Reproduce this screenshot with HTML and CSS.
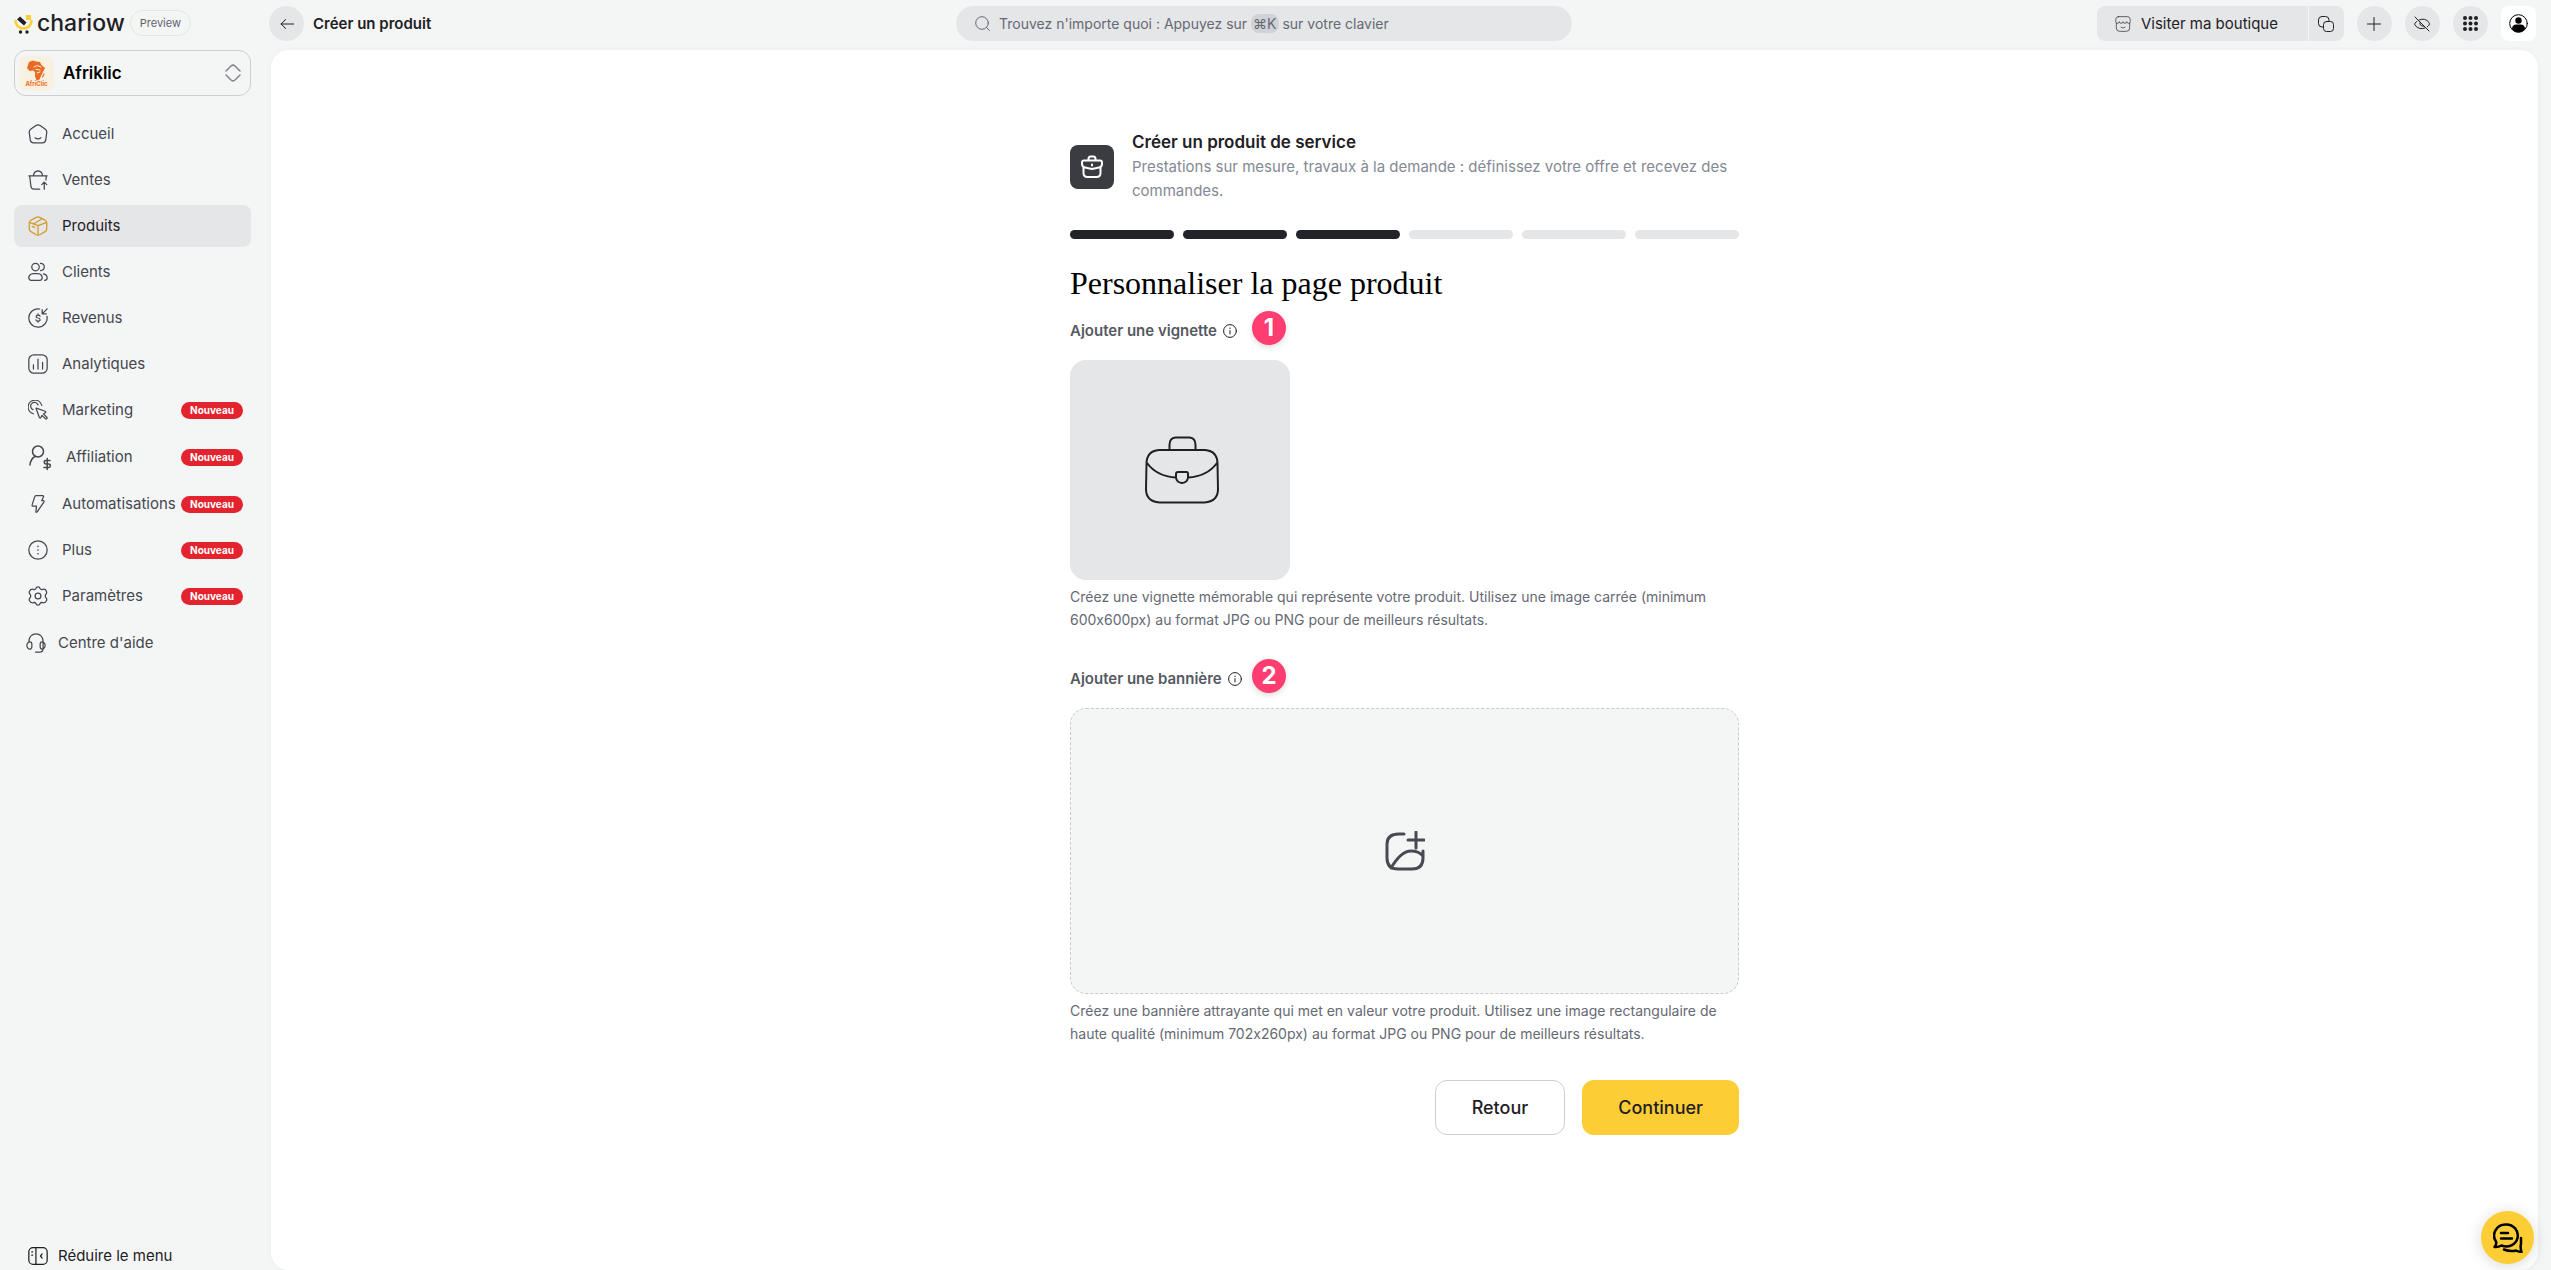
FILE: index.html
```html
<!DOCTYPE html>
<html lang="fr">
<head>
  <meta charset="UTF-8" />
  <meta name="viewport" content="width=device-width, initial-scale=1" />
  <title>Créer un produit - Chariow</title>
  <link rel="stylesheet" href="styles.css">
</head>
<body>
  <aside class="sidebar">
    <div class="brand">
      <a class="logo" href="#">
        <svg width="19" height="21" viewBox="0 0 19 21" aria-hidden="true">
          <path d="M1.500 8a8 7.500 0 0 0 16 0" fill="none" stroke="#fdcd35" stroke-width="2.600"/>
          <rect x="12" y="2" width="5" height="5" fill="#fdcd35"/>
          <path d="M3 6.500 6 3.500 12.500 9.500 10 12.500z" fill="#1f2024"/>
          <circle cx="6.500" cy="19" r="1.700" fill="#1f2024"/>
          <circle cx="13" cy="19" r="1.700" fill="#1f2024"/>
        </svg>
        <span>chariow</span>
      </a>
      <span class="preview">Preview</span>
    </div>

    <button class="store" type="button">
      <svg class="store-logo" width="35" height="35" viewBox="0 0 35 35" aria-hidden="true">
        <rect width="35" height="35" rx="8" fill="#f8f0e0"/>
        <path d="M10 6l4-1.500 3 1 4 .5 1.500 3 3.500 3-2 4-1.500 3-2 4.500-3 1-1.500-4v-4l-1.500-2-4 .5-2.500-3z" fill="#ea6b24"/>
        <path d="M15 11l3-1.500 4 1.500M17 13.500l4 .5M18 17l3-1" stroke="#f8f0e0" stroke-width="1" fill="none"/>
        <path d="M25 18l-1.500 3" stroke="#ea6b24" stroke-width="1.200"/>
        <text x="17.500" y="30" text-anchor="middle">AfriClic</text>
      </svg>
      <span class="store-name">Afriklic</span>
      <svg width="16" height="18" viewBox="0 0 16 18" class="chevrons"><path d="M1 7l5-5q2-1.700 4 0l5 5M1 11l5 5q2 1.700 4 0l5-5"/></svg>
    </button>

    <nav class="menu">
      <a href="#"><svg class="icon" viewBox="0 0 24 24"><path d="M9.500 1.800Q12 .200 14.500 1.800l6.300 4.500q2 1.500 1.700 4l-1.200 8.700q-.6 3.500-3.800 3.500h-11q-3.200 0-3.800-3.500L1.500 10.300q-.3-2.500 1.700-4zM8.500 16.500q3.500 2.500 7 0"/></svg><span>Accueil</span></a>
      <a href="#"><svg class="icon" viewBox="0 0 24 24"><path d="M1 7h22M6.500 7q.5-5.500 5.500-6 5 .5 5.500 6M2 7l1.500 12.500q.4 3.500 3.500 3.500h7M22 7l-.5 5M19.500 23v-8.500M16.500 17.500l3-3 3 3"/></svg><span>Ventes</span></a>
      <a href="#" class="active"><svg class="icon" viewBox="0 0 24 24"><path d="M12 23q-1 0-2-.5l-6.500-3.700Q1.500 17.700 1.500 15.500V7.700L12 11.500l10.500-3.800v7.800q0 2.200-2 3.300L14 22.500q-1 .5-2 .5zV11.500M1.500 7.700Q1.800 6 3.500 5L10 1.600q2-1 4 0L20.500 5q1.700 1 2 2.700M6.500 9.500l10-6M5 12.500l3 1.200"/></svg><span>Produits</span></a>
      <a href="#"><svg class="icon" viewBox="0 0 24 24"><circle cx="9" cy="6" r="4.500"/><path d="M15 1.700q4.500.3 4.500 4.300t-4.500 4.300M6.500 14h5q5.500.5 5.500 5 0 3-3 3H4q-3 0-3-3 0-4.500 5.500-5zM18.500 14.200q4.500.8 4.500 5 0 2.500-3 2.800"/></svg><span>Clients</span></a>
      <a href="#"><svg class="icon" viewBox="0 0 24 24"><path d="M14 1.200A11 11 0 1 0 22.800 10M23 1l-6 6M17 2v5h5M14.500 9.800q-.5-1.300-2.500-1.300-2.200 0-2.200 1.700T12 12q2.500.2 2.500 2T12 15.600q-2.200 0-2.500-1.400M12 7v1.500M12 15.600V17"/></svg><span>Revenus</span></a>
      <a href="#"><svg class="icon" viewBox="0 0 24 24"><rect x="1" y="1" width="22" height="22" rx="6"/><path d="M6.500 13v5M12 6v12M17.500 10v8"/></svg><span>Analytiques</span></a>
      <a href="#"><svg class="icon" viewBox="0 0 24 24"><path d="M6.500 16.500A8.300 8.300 0 1 1 16.500 6.500M6 11.500A4.500 4.500 0 1 1 12 6M10 11q-.8-1.800 1-1l9.500 3.500q2 1 0 2l-2 1.200 4 4q.8 1 0 1.700t-1.700 0l-4-4-1.300 2.500q-1 1.700-1.800 0z"/></svg><span>Marketing</span><b class="tag">Nouveau</b></a>
      <a href="#" class="tall"><svg class="icon wide" viewBox="0 0 24 24"><circle cx="10" cy="6.500" r="5.500"/><path d="M2 20q.5-6 5-8.500M22 15.500h-4q-1.800 0-1.800 1.700t1.800 1.800h2.500q1.800 0 1.800 1.700T20.500 22.500H16M19.200 13.500v11"/></svg><span>Affiliation</span><b class="tag">Nouveau</b></a>
      <a href="#"><svg class="icon" viewBox="0 0 24 24"><path d="M9.500 2h8q1.800 0 1 1.500L16.500 8h1.700q1.700.2.800 1.700L11 21.500q-1.500 1.500-1.500-.5l.7-6.500H6q-1.600-.2-1-1.700L8 3.500Q8.500 2 9.500 2z"/></svg><span>Automatisations</span><b class="tag">Nouveau</b></a>
      <a href="#"><svg class="icon" viewBox="0 0 24 24"><circle cx="12" cy="12" r="11"/><path d="M12 7.500v.1M12 12v.1M12 16.500v.1" stroke-width="2"/></svg><span>Plus</span><b class="tag">Nouveau</b></a>
      <a href="#"><svg class="icon" viewBox="0 0 24 24"><circle cx="12" cy="12" r="3.500"/><path d="M9.500 3Q10 1 12 1t2.500 2q1 2 3.200 1 2-.8 3.200.5t1.500 3Q22.500 9 21.500 9.800q-1.500 2.200 0 4.400 1.700 1.500.7 3.500-1.500 3-4.500 2.300-2.200-.7-3.200 1Q14 23 12 23t-2.500-2q-1-1.700-3.200-1-3 .7-4.500-2.300-1-2 .7-3.500 1.500-2.200 0-4.400-1.700-1.500-.7-3.500Q3.300 3.300 6.300 4q2.200 1 3.200-1z"/></svg><span>Paramètres</span><b class="tag">Nouveau</b></a>
      <a href="#" class="help"><svg class="icon" viewBox="0 0 24 24"><path d="M3.500 11V9.500a8.500 8.500 0 0 1 17 0V19q0 4-4 4h-5M3.500 11q3-1 3.500 2v4q-.5 3-3.500 2-2.500-1-2.500-4t2.500-4zM20.500 11q-3-1-3.500 2v4q.5 3 3.500 2 2.500-1 2.500-4t-2.500-4z"/></svg><span>Centre d'aide</span></a>
    </nav>

    <button class="collapse" type="button">
      <svg class="icon" viewBox="0 0 24 24"><rect x="1" y="2" width="22" height="20" rx="5"/><path d="M9.500 2v20M4.500 7h1M4.500 11h1M17 9.500l-2 2.500 2 2.500"/></svg>
      Réduire le menu
    </button>
  </aside>

  <div class="page">
    <header class="topbar">
      <div class="crumb">
        <button class="round" type="button" aria-label="Revenir"><svg width="14" height="12" viewBox="0 0 14 12"><path d="M14 6H1M5.500 1.500Q3 4.500 1 6q2 1.500 4.500 4.500"/></svg></button>
        <h1>Créer un produit</h1>
      </div>

      <button class="search" type="button">
        <svg width="15" height="15" viewBox="0 0 15 15"><circle cx="7" cy="7" r="6.300"/><path d="M11.500 11.500l3 3"/></svg>
        <span>Trouvez n'importe quoi : Appuyez sur <kbd>⌘K</kbd> sur votre clavier</span>
      </button>

      <div class="tools">
        <div class="shop">
          <a href="#" class="visit"><svg width="16" height="16" viewBox="0 0 24 24"><path d="M2 11v7q0 5 5 5h10q5 0 5-5v-7M5 1h14q3 0 3.500 3l.5 4q0 3-2.700 3-2.300 0-2.800-2.500Q17 11 14.800 11T12 8.500Q11.500 11 9.200 11T6.500 8.500Q6 11 3.700 11 1 11 1 8l.5-4Q2 1 5 1zM9 17q3 2.500 6 0"/></svg>Visiter ma boutique</a>
          <button class="copy" type="button" aria-label="Copier le lien"><svg width="16" height="16" viewBox="0 0 16 16"><path d="M5.500 11H4Q.5 11 .5 7.500V4Q.5.500 4 .5h3.500Q11 .5 11 4v1.500"/><rect x="5.500" y="5.500" width="10" height="10" rx="3"/></svg></button>
        </div>
        <button class="round" type="button" aria-label="Ajouter"><svg width="14" height="14" viewBox="0 0 14 14"><path d="M7 .500v13M.5 7h13"/></svg></button>
        <button class="round" type="button" aria-label="Masquer"><svg width="16" height="16" viewBox="0 0 16 16"><path d="M1 1l14 14M5 4Q11 1.300 15 6.500q1 1.300 0 2.700-.8 1-1.700 1.700M3 5.200Q2 6 1 7.200q-.7 1 0 2Q5 14.300 11 12M6 6.500q-1 3.500 3.500 3.700"/></svg></button>
        <button class="round" type="button" aria-label="Applications"><svg class="dots" width="15" height="15" viewBox="0 0 15 15"><circle cx="2" cy="2" r="2"/><circle cx="7.500" cy="2" r="2"/><circle cx="13" cy="2" r="2"/><circle cx="2" cy="7.500" r="2"/><circle cx="7.500" cy="7.500" r="2"/><circle cx="13" cy="7.500" r="2"/><circle cx="2" cy="13" r="2"/><circle cx="7.500" cy="13" r="2"/><circle cx="13" cy="13" r="2"/></svg></button>
        <button class="avatar" type="button" aria-label="Mon compte"><svg width="19" height="19" viewBox="0 0 19 19"><circle cx="9.500" cy="9.500" r="8.800" fill="none" stroke="#000"/><circle cx="9.500" cy="6.500" r="3.200"/><path d="M3 15q0-4.500 4.500-4.500h4q4.500 0 4.500 4.500-2.500 3.300-6.500 3.300T3 15z"/></svg></button>
      </div>
    </header>

    <main class="panel">
      <form class="product">
        <div class="intro">
          <span class="intro-icon"><svg width="24" height="24" viewBox="0 0 24 24"><path d="M8.500 5V4q0-2.500 2-2.500h3q2 0 2 2.500v1M4 5.500h16q2 0 2 2v1.500q0 3-3 3.500l-7 1.500-7-1.500Q2 12 2 9V7.500q0-2 2-2zM3.500 12.500V18q0 4 4 4h9q4 0 4-4v-5.500M12 9.500v1"/></svg></span>
          <div>
            <h2>Créer un produit de service</h2>
            <p>Prestations sur mesure, travaux à la demande : définissez votre offre et recevez des commandes.</p>
          </div>
        </div>

        <div class="steps">
          <i class="done"></i><i class="done"></i><i class="done"></i><i></i><i></i><i></i>
        </div>

        <h3>Personnaliser la page produit</h3>

        <div class="field">
          <div class="field-head">
            <label for="vignette">Ajouter une vignette</label>
            <svg class="info" width="14" height="14" viewBox="0 0 14 14"><circle cx="7" cy="7" r="6.400"/><path d="M7 6.500v3.500M7 4v.6"/></svg>
            <span class="marker">1</span>
          </div>
          <button class="vignette" id="vignette" type="button">
            <svg width="74" height="68" viewBox="0 0 74 68"><path d="M24.500 14V9q0-7 6-7.500h14q6 .5 6 7.500v5M1.500 28q0-13 12.500-14h46q12.500 1 12.500 14l.5 25q0 12.500-13.500 13.500h-45Q1 65.500 1 53zM2 27q10 13.500 29 14.500M72 27q-10 13.500-29 14.500M33 36h8.500q1.500 0 1.500 2v3.500q-.5 5-6 5.500-5.500-.5-6-5.500V38q0-2 2-2z"/></svg>
          </button>
          <p class="hint">Créez une vignette mémorable qui représente votre produit. Utilisez une image carrée (minimum 600x600px) au format JPG ou PNG pour de meilleurs résultats.</p>
        </div>

        <div class="field">
          <div class="field-head">
            <label for="banner">Ajouter une bannière</label>
            <svg class="info" width="14" height="14" viewBox="0 0 14 14"><circle cx="7" cy="7" r="6.400"/><path d="M7 6.500v3.500M7 4v.6"/></svg>
            <span class="marker">2</span>
          </div>
          <button class="banner" id="banner" type="button">
            <svg width="40" height="40" viewBox="0 0 40 40"><path d="M19 3h-5Q2 3 2 13v14q0 11 11 11h14q11 0 11-11v-7M6 37Q16 20 26 20q8 0 12 5M31 1v16M23 9h16"/></svg>
          </button>
          <p class="hint">Créez une bannière attrayante qui met en valeur votre produit. Utilisez une image rectangulaire de haute qualité (minimum 702x260px) au format JPG ou PNG pour de meilleurs résultats.</p>
        </div>

        <div class="actions">
          <button class="back" type="button">Retour</button>
          <button class="next" type="submit">Continuer</button>
        </div>
      </form>
    </main>
  </div>

  <button class="chat" type="button" aria-label="Discussion">
    <svg width="30" height="30" viewBox="0 0 30 30"><path d="M13 1.500a11.500 11 0 1 1-4.500 21Q5 24.500 1.500 24 4 21 3 18.500A11.500 11 0 0 1 13 1.500zM8 10h7M8 15.500h11M28 15v6q-1 3 .5 8-4-.5-5.500-1.500-6 1.500-12-1"/></svg>
  </button>
</body>
</html>
```

FILE: styles.css
```css
* { box-sizing: border-box; }
body {
  margin: 0;
  min-height: 100vh;
  display: flex;
  background: #f4f6f5;
  color: #1f2024;
  font-family: Inter, sans-serif;
  font-size: 15px;
  line-height: 24px;
  font-variant-ligatures: no-contextual;
}
button { font: inherit; font-variant-ligatures: inherit; color: inherit; border: none; padding: 0; cursor: pointer; }
a { color: inherit; text-decoration: none; }
h1, h2, h3, p { margin: 0; }
svg { fill: none; stroke: currentColor; stroke-linecap: round; stroke-linejoin: round; flex: none; }

/* sidebar */
.sidebar {
  width: 269px;
  flex: none;
  padding: 10px 18px 0 14px;
  display: flex;
  flex-direction: column;
  min-height: 100vh;
}
.brand { display: flex; align-items: center; gap: 5px; height: 26px; }
.logo { display: flex; align-items: center; gap: 4px; font-size: 23px; font-weight: 500; }
.logo svg { stroke: none; }
.preview {
  border: 1px solid #e4e5e7;
  border-radius: 13px;
  padding: 0 9px;
  font-size: 11px;
  color: #5f626c;
}
.store {
  margin-top: 14px;
  height: 46px;
  padding: 0 9px 0 4px;
  border: 1px solid #cdced3;
  border-radius: 12px;
  background: none;
  display: flex;
  align-items: center;
  gap: 9px;
  text-align: left;
}
.store-logo { stroke: none; }
.store-logo text { font-size: 6px; font-weight: 700; fill: #ea6b24; }
.store-name { flex: 1; font-size: 17px; font-weight: 600; color: #000; }
.chevrons { color: #82858f; stroke-width: 1.5; }

.menu { margin-top: 17px; display: flex; flex-direction: column; gap: 4px; }
.menu a {
  height: 42px;
  padding: 0 8px 0 14px;
  border-radius: 8px;
  display: flex;
  align-items: center;
  gap: 14px;
  color: #45474f;
}
.menu a.active { background: #e5e6e8; color: #1f2024; }
.menu a.active .icon { color: #d49a2b; }
.menu a.tall { height: 44px; }
.menu a.help { padding-left: 12px; gap: 12px; height: 44px; }
.menu span { flex: 1; min-width: 0; white-space: nowrap; }
.icon { width: 20px; height: 20px; stroke-width: 1.5; }
.icon.wide { width: 24px; height: 24px; overflow: visible; }
.tag {
  flex: none;
  width: 62px;
  background: #e3242f;
  color: #fff;
  border-radius: 9px;
  font-size: 10px;
  line-height: 17px;
  text-align: center;
}
.collapse {
  margin-top: auto;
  height: 28px;
  padding-left: 14px;
  background: none;
  display: flex;
  align-items: center;
  gap: 10px;
}

/* top bar */
.page { flex: 1; min-width: 0; display: flex; flex-direction: column; padding-right: 13px; }
.topbar {
  height: 50px;
  padding: 6px 2px 9px 0;
  display: flex;
  align-items: center;
  justify-content: space-between;
  gap: 16px;
}
.crumb { display: flex; align-items: center; gap: 9px; }
.crumb h1 { font-size: 15px; font-weight: 600; }
.round {
  width: 35px;
  height: 35px;
  border-radius: 50%;
  background: #e5e6e8;
  display: flex;
  align-items: center;
  justify-content: center;
}
.dots circle { fill: #1f2024; stroke: none; }
.search {
  width: 616px;
  height: 35px;
  padding: 0 19px;
  border-radius: 18px;
  background: #e5e6e8;
  color: #656973;
  font-size: 14px;
  display: flex;
  align-items: center;
  gap: 9px;
}
.search kbd { font: inherit; background: #d0d2d7; border-radius: 8px; padding: 1px 2px; }
.tools { display: flex; justify-content: flex-end; gap: 13px; }
.shop { display: flex; gap: 1px; border-radius: 8px; overflow: hidden; }
.visit, .copy { background: #e5e6e8; height: 35px; display: flex; align-items: center; }
.visit { padding: 0 30px 0 18px; gap: 10px; }
.copy { width: 35px; justify-content: center; }
.avatar {
  width: 35px;
  height: 35px;
  border-radius: 8px;
  background: #fff;
  display: flex;
  align-items: center;
  justify-content: center;
}
.avatar svg { stroke: none; fill: #000; }

/* form */
.panel {
  flex: 1;
  margin-left: 2px;
  background: #fff;
  border-radius: 18px;
  box-shadow: 0 0 6px rgba(0, 0, 0, 0.04);
  padding: 80px 24px;
}
.product { max-width: 669px; margin: 0 auto; }
.intro { display: flex; align-items: center; gap: 18px; }
.intro-icon {
  width: 44px;
  height: 44px;
  flex: none;
  border-radius: 8px;
  background: #3b3c41;
  color: #fff;
  display: flex;
  align-items: center;
  justify-content: center;
}
.intro svg { stroke-width: 2; }
.intro h2 { font-size: 17px; font-weight: 600; }
.intro p { margin-top: 1px; color: #858993; }
.steps { display: flex; gap: 9px; margin: 27px 0 20px; }
.steps i { flex: 1; height: 9px; border-radius: 5px; background: #e5e6e8; }
.steps i.done { background: #232429; }
.product h3 {
  margin-bottom: 6px;
  font-family: "Liberation Serif", serif;
  font-size: 32px;
  line-height: 48px;
  font-weight: 400;
  color: #000;
}
.field { margin-bottom: 30px; }
.field-head {
  position: relative;
  height: 47px;
  padding-bottom: 11px;
  display: flex;
  align-items: center;
  gap: 6px;
}
.field-head label { font-weight: 600; color: #555962; }
.info { color: #1f2024; }
.marker {
  position: absolute;
  left: 182px;
  top: -2px;
  width: 34px;
  height: 34px;
  border-radius: 50%;
  background: #ff3d71;
  box-shadow: 0 2px 6px rgba(0, 0, 0, 0.15);
  color: #fff;
  font-size: 24px;
  font-weight: 700;
  line-height: 34px;
  text-align: center;
}
.vignette, .banner { display: flex; align-items: center; justify-content: center; border-radius: 16px; }
.vignette { width: 220px; height: 220px; padding-left: 4px; background: #e5e6e8; }
.vignette svg { stroke-width: 2; }
.banner {
  width: 100%;
  height: 286px;
  background: #f4f6f5;
  border: 1px dashed #c9cccf;
  color: #484a53;
}
.banner svg { stroke-width: 3; }
.hint { margin-top: 5px; font-size: 14px; line-height: 23px; color: #656973; }
.actions { display: flex; justify-content: flex-end; gap: 17px; margin-top: 35px; }
.actions button { height: 55px; padding: 0 36px; border-radius: 12px; font-size: 18px; font-weight: 500; }
.actions .back { background: #fff; border: 1px solid #cdced3; }
.actions .next { background: #fdcd35; }

.chat {
  position: fixed;
  right: 17px;
  bottom: 6px;
  width: 53px;
  height: 53px;
  border-radius: 50%;
  background: #fdcd35;
  box-shadow: 0 2px 16px rgba(0, 0, 0, 0.15);
  color: #000;
  display: flex;
  align-items: center;
  justify-content: center;
}
.chat svg { stroke-width: 2.5; }
```
